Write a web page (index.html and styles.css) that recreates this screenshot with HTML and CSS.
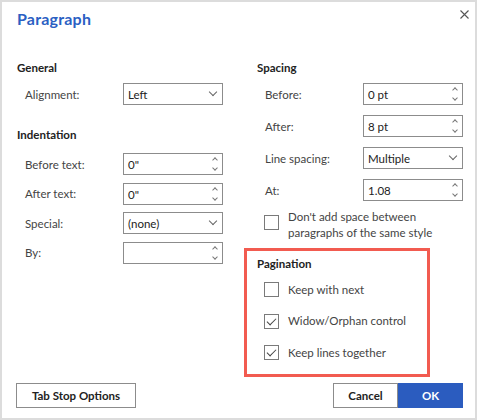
FILE: index.html
```html
<!DOCTYPE html>
<html lang="en">
<head>
    <meta charset="UTF-8">
    <meta name="viewport" content="width=device-width, initial-scale=1.0">
    <title>Paragraph</title>
    <link rel="stylesheet" href="styles.css">
</head>
<body>
    <div class="dialog">
        <div class="header">
            <h1>Paragraph</h1>
            <span class="close">
                <svg width="9" height="9" viewBox="0 0 9 9"><path d="M0.5 0.5 L8.5 8.5 M8.5 0.5 L0.5 8.5" stroke="#555" stroke-width="1.1" fill="none"/></svg>
            </span>
        </div>

        <div class="columns">
            <div class="col">
                <h3 class="group">General</h3>
                <div class="row">
                    <label>Alignment:</label>
                    <div class="field select"><span>Left</span><i class="caret"></i></div>
                </div>

                <h3 class="group second">Indentation</h3>
                <div class="rows tight">
                    <div class="row">
                        <label>Before text:</label>
                        <div class="field spin"><span>0"</span><i class="arrows"></i></div>
                    </div>
                    <div class="row">
                        <label>After text:</label>
                        <div class="field spin"><span>0"</span><i class="arrows"></i></div>
                    </div>
                    <div class="row">
                        <label>Special:</label>
                        <div class="field select"><span>(none)</span><i class="caret"></i></div>
                    </div>
                    <div class="row">
                        <label>By:</label>
                        <div class="field spin"><span></span><i class="arrows"></i></div>
                    </div>
                </div>
            </div>

            <div class="col">
                <h3 class="group">Spacing</h3>
                <div class="rows">
                    <div class="row">
                        <label>Before:</label>
                        <div class="field spin"><span>0 pt</span><i class="arrows"></i></div>
                    </div>
                    <div class="row">
                        <label>After:</label>
                        <div class="field spin"><span>8 pt</span><i class="arrows"></i></div>
                    </div>
                    <div class="row">
                        <label>Line spacing:</label>
                        <div class="field select"><span>Multiple</span><i class="caret"></i></div>
                    </div>
                    <div class="row">
                        <label>At:</label>
                        <div class="field spin"><span>1.08</span><i class="arrows"></i></div>
                    </div>
                </div>
                <div class="check multi">
                    <span class="box"></span>
                    <span>Don't add space between<br>paragraphs of the same style</span>
                </div>

                <div class="pagination">
                    <h3 class="group">Pagination</h3>
                    <div class="check"><span class="box"></span><span>Keep with next</span></div>
                    <div class="check"><span class="box checked"></span><span>Widow/Orphan control</span></div>
                    <div class="check"><span class="box checked"></span><span>Keep lines together</span></div>
                </div>
            </div>
        </div>

        <div class="footer">
            <button class="btn wide">Tab Stop Options</button>
            <div class="actions">
                <button class="btn">Cancel</button>
                <button class="btn primary">OK</button>
            </div>
        </div>
    </div>
</body>
</html>
```

FILE: styles.css
```css
body {
    margin: 0;
    font-family: 'Lato', 'Open Sans', sans-serif;
    font-size: 11.5px;
    color: #333;
    background: #fff;
}

.dialog {
    width: 477px;
    height: 420px;
    box-sizing: border-box;
    border: 2px solid #dcdcdc;
    display: flex;
    flex-direction: column;
    background: #fff;
}

.header {
    display: flex;
    justify-content: space-between;
    align-items: flex-start;
    padding: 6px 6px 0 15px;
    height: 58px;
    box-sizing: border-box;
}

.header h1 {
    margin: 0;
    font-size: 16px;
    line-height: 22px;
    font-weight: 700;
    color: #2b5fc3;
    letter-spacing: 0.2px;
}

.close {
    margin-top: 2px;
    display: flex;
}

.columns {
    display: grid;
    grid-template-columns: 206px 206px;
    column-gap: 34px;
    padding-left: 15px;
}

.group {
    margin: 0 0 7px 0;
    font-size: 11.5px;
    line-height: 16px;
    font-weight: 700;
    color: #222;
}

.group.second {
    margin-top: 22px;
    margin-bottom: 10px;
}

.rows {
    display: flex;
    flex-direction: column;
    gap: 10px;
}

.rows.tight {
    gap: 7.5px;
}

.row {
    display: flex;
    align-items: center;
    padding-left: 8px;
}

.row label {
    width: 98px;
    color: #444;
}

.field {
    width: 100px;
    height: 22px;
    box-sizing: border-box;
    border: 1px solid #8c8c8c;
    display: flex;
    align-items: center;
    justify-content: space-between;
    padding: 0 4px 0 4px;
    color: #222;
}

.field span {
    padding-top: 1px;
}

.caret {
    width: 5px;
    height: 5px;
    border-right: 1px solid #666;
    border-bottom: 1px solid #666;
    transform: rotate(45deg);
    margin: -4px 2px 0 0;
}

.arrows {
    width: 6px;
    height: 16px;
    position: relative;
}

.arrows::before,
.arrows::after {
    content: '';
    position: absolute;
    left: 1px;
    width: 3px;
    height: 3px;
    border-left: 1px solid #777;
    border-top: 1px solid #777;
    transform: rotate(45deg);
}

.arrows::before {
    top: 2px;
}

.arrows::after {
    bottom: 2px;
    transform: rotate(225deg);
}

.check {
    display: flex;
    align-items: center;
    gap: 9px;
    padding-left: 7px;
    color: #444;
    line-height: 16px;
}

.check.multi {
    align-items: flex-start;
    margin-top: 8px;
}

.check.multi .box {
    margin-top: 6px;
}

.box {
    flex: none;
    width: 15px;
    height: 15px;
    box-sizing: border-box;
    border: 1px solid #7a7a7a;
    position: relative;
}

.box.checked::after {
    content: '';
    position: absolute;
    left: 4px;
    top: 1px;
    width: 4px;
    height: 8px;
    border-right: 1px solid #444;
    border-bottom: 1px solid #444;
    transform: rotate(45deg);
}

.pagination {
    margin: 7px 0 0 -13px;
    width: 186px;
    height: 129px;
    box-sizing: border-box;
    border: 3px solid #f25b50;
    padding: 5px 0 0 10px;
    display: flex;
    flex-direction: column;
    gap: 15.5px;
}

.pagination .group {
    margin: 0 0 -6px 0;
}

.footer {
    margin-top: auto;
    display: flex;
    justify-content: space-between;
    padding: 0 12px 10px 14px;
}

.actions {
    display: flex;
}

.btn {
    height: 25px;
    box-sizing: border-box;
    border: 1px solid #8c8c8c;
    background: #fff;
    font-family: inherit;
    font-size: 11.5px;
    font-weight: 700;
    color: #222;
    padding: 0;
}

.btn.wide {
    width: 120px;
}

.actions .btn {
    width: 65px;
}

.btn.primary {
    background: #2b5cbf;
    border-color: #2b5cbf;
    color: #fff;
}
```
